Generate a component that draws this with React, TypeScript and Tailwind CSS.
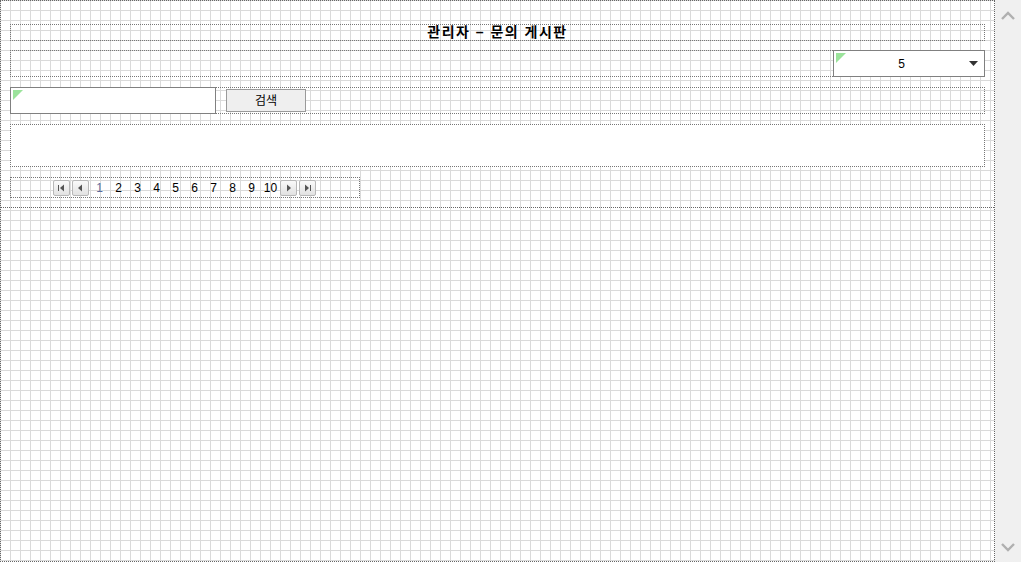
import React from "react";

const font = { fontFamily: '"Liberation Sans", "Noto Sans CJK KR", sans-serif' };

function GreenCorner() {
  return (
    <svg className="absolute left-[2px] top-[2px]" width="10" height="10" viewBox="0 0 10 10">
      <polygon points="0,0 10,0 0,10" fill="#9be39b" />
    </svg>
  );
}

function PagerBtn({ kind }: { kind: "first" | "prev" | "next" | "last" }) {
  return (
    <div className="w-[17px] h-[16px] rounded-[2px] border border-[#b8b8b8] bg-[linear-gradient(to_bottom,#fafafa,#e2e2e2)] flex items-center justify-center">
      <svg width="9" height="8" viewBox="0 0 9 8">
        {kind === "first" && (
          <>
            <rect x="1" y="1" width="1" height="6" fill="#555" />
            <polygon points="7,0.5 7,7.5 3,4" fill="#555" />
          </>
        )}
        {kind === "prev" && <polygon points="6,0.5 6,7.5 2,4" fill="#555" />}
        {kind === "next" && <polygon points="3,0.5 3,7.5 7,4" fill="#555" />}
        {kind === "last" && (
          <>
            <polygon points="2,0.5 2,7.5 6,4" fill="#555" />
            <rect x="7" y="1" width="1" height="6" fill="#555" />
          </>
        )}
      </svg>
    </div>
  );
}

function Chevron({ up }: { up: boolean }) {
  return (
    <div className="h-[30px] w-[26px] flex items-center justify-center">
      <svg width="14" height="9" viewBox="0 0 14 9">
        <path d={up ? "M1 8 L7 2 L13 8" : "M1 1 L7 7 L13 1"} fill="none" stroke="#b0b0b0" strokeWidth="2.4" />
      </svg>
    </div>
  );
}

export default function App() {
  const nums = [1, 2, 3, 4, 5, 6, 7, 8, 9, 10];
  return (
    <div className="w-[1021px] h-[562px] flex bg-white overflow-hidden text-[12px] text-black" style={font}>
      <div className="w-[995px] shrink-0 h-[562px] flex flex-col border border-dotted border-[#666] bg-[linear-gradient(to_right,#dadada_1px,transparent_1px),linear-gradient(to_bottom,#dadada_1px,transparent_1px)] bg-[size:10px_10px] bg-[position:-1px_-1px]">
        <div className="h-[207px] border-b border-dotted border-[#666] flex flex-col pl-[9px] pr-[9px] pt-[23px]">
          <div className="h-[17px] border border-dotted border-[#777] flex items-center justify-center">
            <span className="font-bold text-[14px] leading-none tracking-[1.5px] whitespace-pre -mt-[2px]">관리자 – 문의 게시판</span>
          </div>
          <div className="mt-[9px] h-[27px] border border-dotted border-[#777] flex justify-end">
            <div className="relative w-[152px] h-[27px] -mt-[1px] -mr-[1px] border border-[#808080] bg-white flex items-center">
              <GreenCorner />
              <span className="flex-1 text-center text-[12px]">5</span>
              <svg className="mr-[6px]" width="9" height="5" viewBox="0 0 9 5">
                <polygon points="0,0 9,0 4.5,5" fill="#333" />
              </svg>
            </div>
          </div>
          <div className="mt-[10px] h-[27px] border border-dotted border-[#777] flex items-center">
            <div className="relative w-[206px] h-[27px] -ml-[1px] border border-[#808080] bg-white">
              <GreenCorner />
            </div>
            <div className="ml-[10px] w-[80px] h-[23px] border border-[#9a9a9a] bg-[#efefef] flex items-center justify-center text-[12px]">
              검색
            </div>
          </div>
          <div className="mt-[10px] h-[43px] border border-dotted border-[#777] bg-white" />
          <div className="mt-[10px] w-[350px] h-[21px] border border-dotted border-[#777] flex items-center pl-[42px]">
            <div className="flex items-center gap-[2px]">
              <PagerBtn kind="first" />
              <PagerBtn kind="prev" />
            </div>
            <div className="flex items-center ml-[1px]">
              {nums.map((n) => (
                <span
                  key={n}
                  className={`w-[19px] text-center text-[12px] ${n === 1 ? "text-[#5b6a9c]" : "text-black"}`}
                >
                  {n}
                </span>
              ))}
            </div>
            <div className="flex items-center gap-[2px]">
              <PagerBtn kind="next" />
              <PagerBtn kind="last" />
            </div>
          </div>
        </div>
        <div className="flex-1" />
      </div>
      <div className="w-[26px] shrink-0 h-[562px] bg-[#f0f0f0] flex flex-col justify-between">
        <Chevron up={true} />
        <Chevron up={false} />
      </div>
    </div>
  );
}
